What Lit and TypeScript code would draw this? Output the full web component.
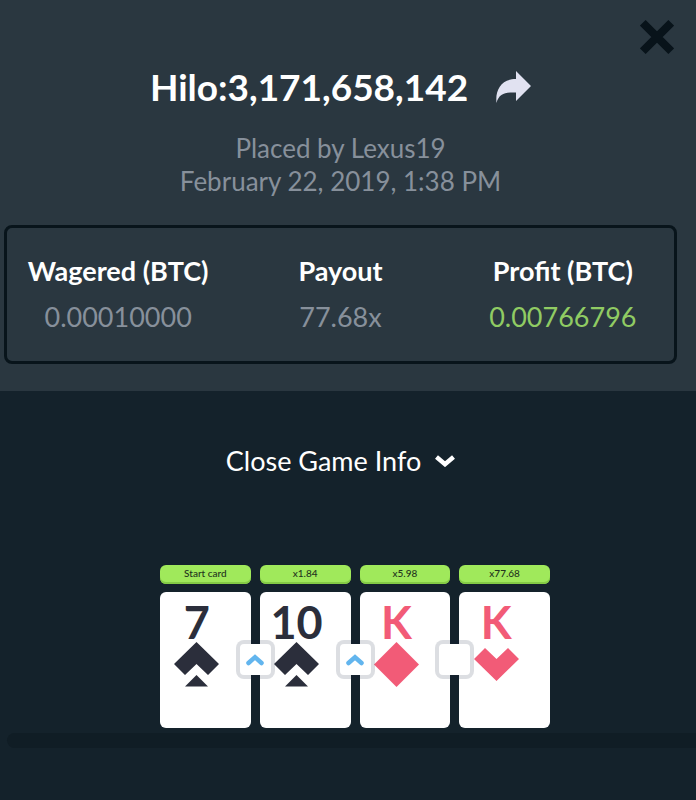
import { LitElement, html, svg, css, nothing } from "lit";
import { customElement, property, state } from "lit/decorators.js";
import { classMap } from "lit/directives/class-map.js";

type Suit = "spade" | "diamond" | "heart";
type Guess = "higher" | "skip";

interface Round {
  label: string;
  rank: string;
  suit: Suit;
  next?: Guess;
}

const rounds: Round[] = [
  { label: "Start card", rank: "7", suit: "spade", next: "higher" },
  { label: "x1.84", rank: "10", suit: "spade", next: "higher" },
  { label: "x5.98", rank: "K", suit: "diamond", next: "skip" },
  { label: "x77.68", rank: "K", suit: "heart" },
];

const suitShapes = {
  spade: svg`<path d="M22.5 0 45 22 34 33 22.5 22 11 33 0 22Z"></path><path d="M22.5 33 34 44.500H11Z"></path>`,
  diamond: svg`<path d="M22.5 0 45 22.5 22.5 45 0 22.5Z"></path>`,
  heart: svg`<path d="M11 6 22.5 17 34 6 45 17 22.5 39 0 17Z"></path>`,
};

@customElement("hilo-card")
class HiloCard extends LitElement {
  @property({ attribute: false }) round!: Round;

  static styles = css`
    :host {
      display: block;
    }
    .label {
      height: 19px;
      box-sizing: border-box;
      border-radius: 6px;
      background: #a0e95b;
      box-shadow: inset 0 -2px 0 #84cb45;
      color: #23331d;
      font-size: 10px;
      font-weight: 500;
      line-height: 17px;
      text-align: center;
    }
    .card {
      position: relative;
      display: flex;
      flex-direction: column;
      align-items: center;
      height: 136px;
      box-sizing: border-box;
      margin-top: 8px;
      padding: 10px 17px 0 0;
      border-radius: 6px;
      background: #fff;
      color: #2b2e3b;
    }
    .red {
      color: #f25b77;
    }
    .rank {
      font: 700 45px/40px "Lato", sans-serif;
    }
    .suit {
      width: 45px;
      height: 45px;
      fill: currentColor;
    }
    .guess {
      position: absolute;
      z-index: 1;
      top: 48px;
      right: -24px;
      display: flex;
      align-items: center;
      justify-content: center;
      width: 39px;
      height: 39px;
      box-sizing: border-box;
      border: 4px solid rgba(20, 33, 60, 0.15);
      border-radius: 8px;
      background: #fff;
      background-clip: padding-box;
    }
    .arrow {
      width: 18px;
      height: 12px;
      fill: none;
      stroke: #62b5ee;
      stroke-width: 4.5;
      stroke-linecap: round;
    }
  `;

  render() {
    const { label, rank, suit, next } = this.round;
    return html`
      <div class="label">${label}</div>
      <div class=${classMap({ card: true, red: suit !== "spade" })}>
        <span class="rank">${rank}</span>
        <svg class="suit" viewBox="0 0 45 45" role="img" aria-label=${suit}>${suitShapes[suit]}</svg>
        ${next
          ? html`<span class="guess">
              ${next === "higher"
                ? html`<svg class="arrow" viewBox="0 0 18 12" role="img" aria-label="higher">
                    <path d="M2.5 9 9 3.200 15.500 9"></path>
                  </svg>`
                : nothing}
            </span>`
          : nothing}
      </div>
    `;
  }
}

@customElement("app-root")
class AppRoot extends LitElement {
  @state() private open = true;

  static styles = css`
    :host {
      display: block;
      min-height: 100vh;
      overflow: hidden;
      background: #14222b;
      color: #fff;
      font: 400 27px/32px "Lato", sans-serif;
    }
    button {
      padding: 0;
      border: 0;
      background: none;
      color: inherit;
      font: inherit;
      cursor: pointer;
    }
    svg {
      display: block;
    }
    .summary {
      position: relative;
      padding: 63px 19px 27px 4px;
      background: #2a3740;
      text-align: center;
    }
    .close {
      position: absolute;
      top: 20px;
      right: 22px;
    }
    .title-row {
      display: flex;
      align-items: center;
      justify-content: center;
      gap: 28px;
    }
    .title {
      margin: 0;
      font-size: 37px;
      line-height: 48px;
      font-weight: 700;
    }
    .placed {
      margin: 21px 0 27px;
      color: #87909b;
      font-size: 26px;
      line-height: 33px;
    }
    .line {
      display: block;
    }
    .stats {
      display: grid;
      grid-template-columns: repeat(3, 1fr);
      margin: 0;
      padding: 27px 0 28px;
      border: 3px solid #08141b;
      border-radius: 8px;
    }
    .name {
      font-weight: 700;
    }
    .value {
      margin: 14px 0 0;
      color: #87909b;
    }
    .gain {
      color: #90cb63;
    }
    .game {
      padding: 54px 0 0;
    }
    .toggle-row {
      padding: 0 19px 0 4px;
    }
    .toggle {
      display: flex;
      align-items: center;
      gap: 14px;
      margin: 0 auto;
    }
    .flip {
      transform: rotate(180deg);
    }
    .history {
      margin: 88px -7px 0 7px;
    }
    .cards {
      display: grid;
      grid-template-columns: repeat(4, 1fr);
      gap: 9px;
      max-width: 390px;
      margin: 0 auto;
    }
    .track {
      height: 15px;
      margin-top: 5px;
      border-radius: 8px;
      background: #101d25;
    }
  `;

  render() {
    return html`
      <section class="summary">
        <button class="close" aria-label="Close">
          <svg width="34" height="34" viewBox="0 0 34 34" fill="none" stroke="#08131a" stroke-width="8">
            <path d="M2.800 2.800 31.200 31.200M31.200 2.800 2.800 31.200"></path>
          </svg>
        </button>
        <div class="title-row">
          <h1 class="title">Hilo:3,171,658,142</h1>
          <button aria-label="Share">
            <svg width="35" height="32" viewBox="0 0 35 32" fill="#e1e2f1">
              <path d="M20 0 35 15 20 30V21.500C10 21 3 22 .5 32-1 18 6 8 20 8Z"></path>
            </svg>
          </button>
        </div>
        <p class="placed">
          <span class="line">Placed by Lexus19</span>
          <span class="line">February 22, 2019, 1:38 PM</span>
        </p>
        <dl class="stats">
          <div>
            <dt class="name">Wagered (BTC)</dt>
            <dd class="value">0.00010000</dd>
          </div>
          <div>
            <dt class="name">Payout</dt>
            <dd class="value">77.68x</dd>
          </div>
          <div>
            <dt class="name">Profit (BTC)</dt>
            <dd class="value gain">0.00766796</dd>
          </div>
        </dl>
      </section>
      <section class="game">
        <div class="toggle-row">
          <button class="toggle" aria-expanded=${this.open} @click=${() => (this.open = !this.open)}>
            ${this.open ? "Close Game Info" : "Open Game Info"}
            <svg class=${classMap({ flip: !this.open })} width="20" height="12" viewBox="0 0 20 12" fill="none" stroke="#fff" stroke-width="4.500">
              <path d="M1.500 2 10 9.200 18.500 2"></path>
            </svg>
          </button>
        </div>
        ${this.open
          ? html`<div class="history">
              <div class="cards">${rounds.map((r) => html`<hilo-card .round=${r}></hilo-card>`)}</div>
              <div class="track"></div>
            </div>`
          : nothing}
      </section>
    `;
  }
}
